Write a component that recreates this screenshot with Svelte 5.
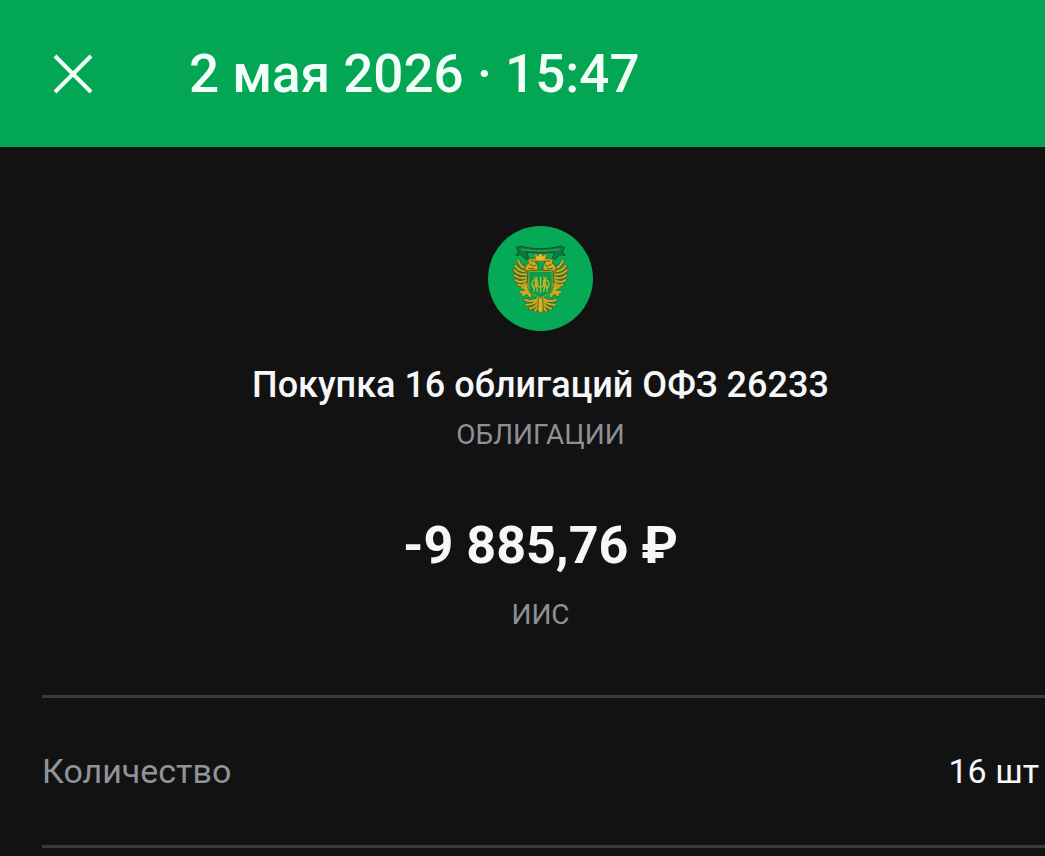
<script lang="ts">
  const date = '2 мая 2026 · 15:47';
  const operation = {
    title: 'Покупка 16 облигаций ОФЗ 26233',
    category: 'ОБЛИГАЦИИ',
    amount: '-9 885,76 ₽',
    account: 'ИИС',
  };
  const details = [{ label: 'Количество', value: '16 шт' }];

  const feathers =
    'M117 128Q98 124 91 104M117 137Q91 136 82 119M115 146Q92 148 79 133M115 155Q95 161 80 148M115 163Q98 174 83 163M116 171Q102 184 91 176';
  const leg = 'M118 174 112 187 119 198 106 207M119 198 126 210M104 184 116 188M100 199 110 199';
  const tail =
    'M153 216Q136 232 112 222M153 219Q140 238 115 237M154 222Q145 246 126 248M155 225Q151 246 141 255';
</script>

{#snippet half()}
  <path d="{feathers}{leg}{tail}" class="dark" />
  <path d={feathers} class="gold" />
  <path d={leg} class="gold wide" />
  <path d={tail} class="gold" />
  <path d="M109 115Q123 126 121 151L117 176" class="dark thin" />
  <path
    d="M112 136Q108 119 122 112L119 101 130 98 142 96 150 104 141 108 150 116 151 133Z"
    fill="#cfa91e"
    stroke="#3c6426"
    stroke-width="3"
  />
  <path d="M129 106 138 104M126 115 137 121 145 117M122 128 138 129" class="dark thin" />
{/snippet}

<header class="bar">
  <button class="close" type="button" aria-label="Закрыть">
    <svg viewBox="0 0 40 40" aria-hidden="true">
      <path d="M2 2 38 38M38 2 2 38" />
    </svg>
  </button>
  <h1 class="date">{date}</h1>
</header>

<main class="operation">
  <section class="summary">
    <svg class="crest" viewBox="0 0 316 316" aria-hidden="true">
      <circle cx="158" cy="158" r="158" fill="#06a955" />

      <g>{@render half()}</g>
      <g transform="matrix(-1 0 0 1 316 0)">{@render half()}</g>
      <path
        d="m151 222 7-12 7 12 1 32-8 11-8-11Z"
        fill="#dcb420"
        stroke="#456c27"
        stroke-width="3"
      />

      <!-- shield with monogram -->
      <path
        d="M123 137H193V198Q190 206 177 207L158 217 139 207Q126 206 123 198Z"
        fill="#079d4f"
        stroke="#a9971f"
        stroke-width="3"
      />
      <path
        d="M140 153 149 198M148 153 137 198M176 153 167 198M168 153 179 198M137 163Q128 177 139 188M179 163Q188 177 177 188M158 153V201M149 163V179Q158 190 167 179V163"
        fill="none"
        stroke="#c9b22a"
        stroke-width="4"
      />

      <!-- crown -->
      <path
        d="M145 105 140 83 151 91 158 77 165 91 176 83 171 105Z"
        fill="#edb923"
        stroke="#806d1b"
        stroke-width="2"
      />

      <!-- ribbon -->
      <path
        d="M85 65 97 61Q158 76 219 61L231 65 224 76 232 89 216 86 202 101 194 96 200 79Q158 85 116 79L122 96 114 101 100 86 84 89 92 76Z"
        fill="#087b40"
        stroke="#07552f"
        stroke-width="3"
      />
      <path
        d="M99 70Q158 80 217 70"
        fill="none"
        stroke="#4c9d51"
        stroke-width="5"
        stroke-dasharray="5 2"
      />
    </svg>
    <h2 class="title">{operation.title}</h2>
    <p class="note">{operation.category}</p>
    <p class="amount">{operation.amount}</p>
    <p class="note">{operation.account}</p>
  </section>

  <dl class="details">
    {#each details as row}
      <div class="row">
        <dt>{row.label}</dt>
        <dd>{row.value}</dd>
      </div>
    {/each}
  </dl>
</main>

<style>
  :global(body) {
    background: #121212;
    color: #f6f7f8;
    font-family: Roboto, 'Liberation Sans', sans-serif;
  }

  .bar {
    display: flex;
    align-items: center;
    gap: 96px;
    height: 147px;
    padding: 0 53px;
    background: #03a653;
    color: #f2fff8;
  }

  .close {
    flex: none;
    width: 40px;
    height: 40px;
    padding: 0;
    border: 0;
    background: none;
    color: inherit;
    cursor: pointer;
  }

  .close svg {
    display: block;
    width: 100%;
    height: 100%;
    fill: none;
    stroke: currentColor;
    stroke-width: 4;
  }

  .date {
    margin: 0;
    font-size: 53px;
    line-height: 64px;
    font-weight: 500;
  }

  .summary {
    display: flex;
    flex-direction: column;
    align-items: center;
    padding: 79px 0 62px 36px;
    text-align: center;
  }

  .crest {
    width: 105px;
    height: 105px;
  }

  .gold {
    fill: none;
    stroke: #d0a91e;
    stroke-width: 6;
    stroke-linecap: round;
    stroke-linejoin: round;
  }

  .wide {
    stroke-width: 8;
  }

  .dark {
    fill: none;
    stroke: #3c6c29;
    stroke-width: 11;
    stroke-linecap: round;
    stroke-linejoin: round;
  }

  .thin {
    stroke-width: 3;
  }

  .title {
    margin: 32px 0 0;
    font-size: 36px;
    line-height: 44px;
    font-weight: 500;
  }

  .note {
    margin: 10px 0 0;
    font-size: 28px;
    line-height: 36px;
    color: #8f9094;
  }

  .amount {
    margin: 61px 0 9px;
    font-size: 52px;
    line-height: 64px;
    font-weight: 700;
  }

  .details {
    margin: 0 0 0 42px;
    border-top: 3px solid #3b3b3b;
  }

  .row {
    display: flex;
    justify-content: space-between;
    gap: 24px;
    padding: 51px 6px 52px 0;
    border-bottom: 3px solid #3b3b3b;
    font-size: 34px;
    line-height: 44px;
  }

  dt {
    color: #929398;
  }

  dd {
    margin: 0;
  }
</style>
